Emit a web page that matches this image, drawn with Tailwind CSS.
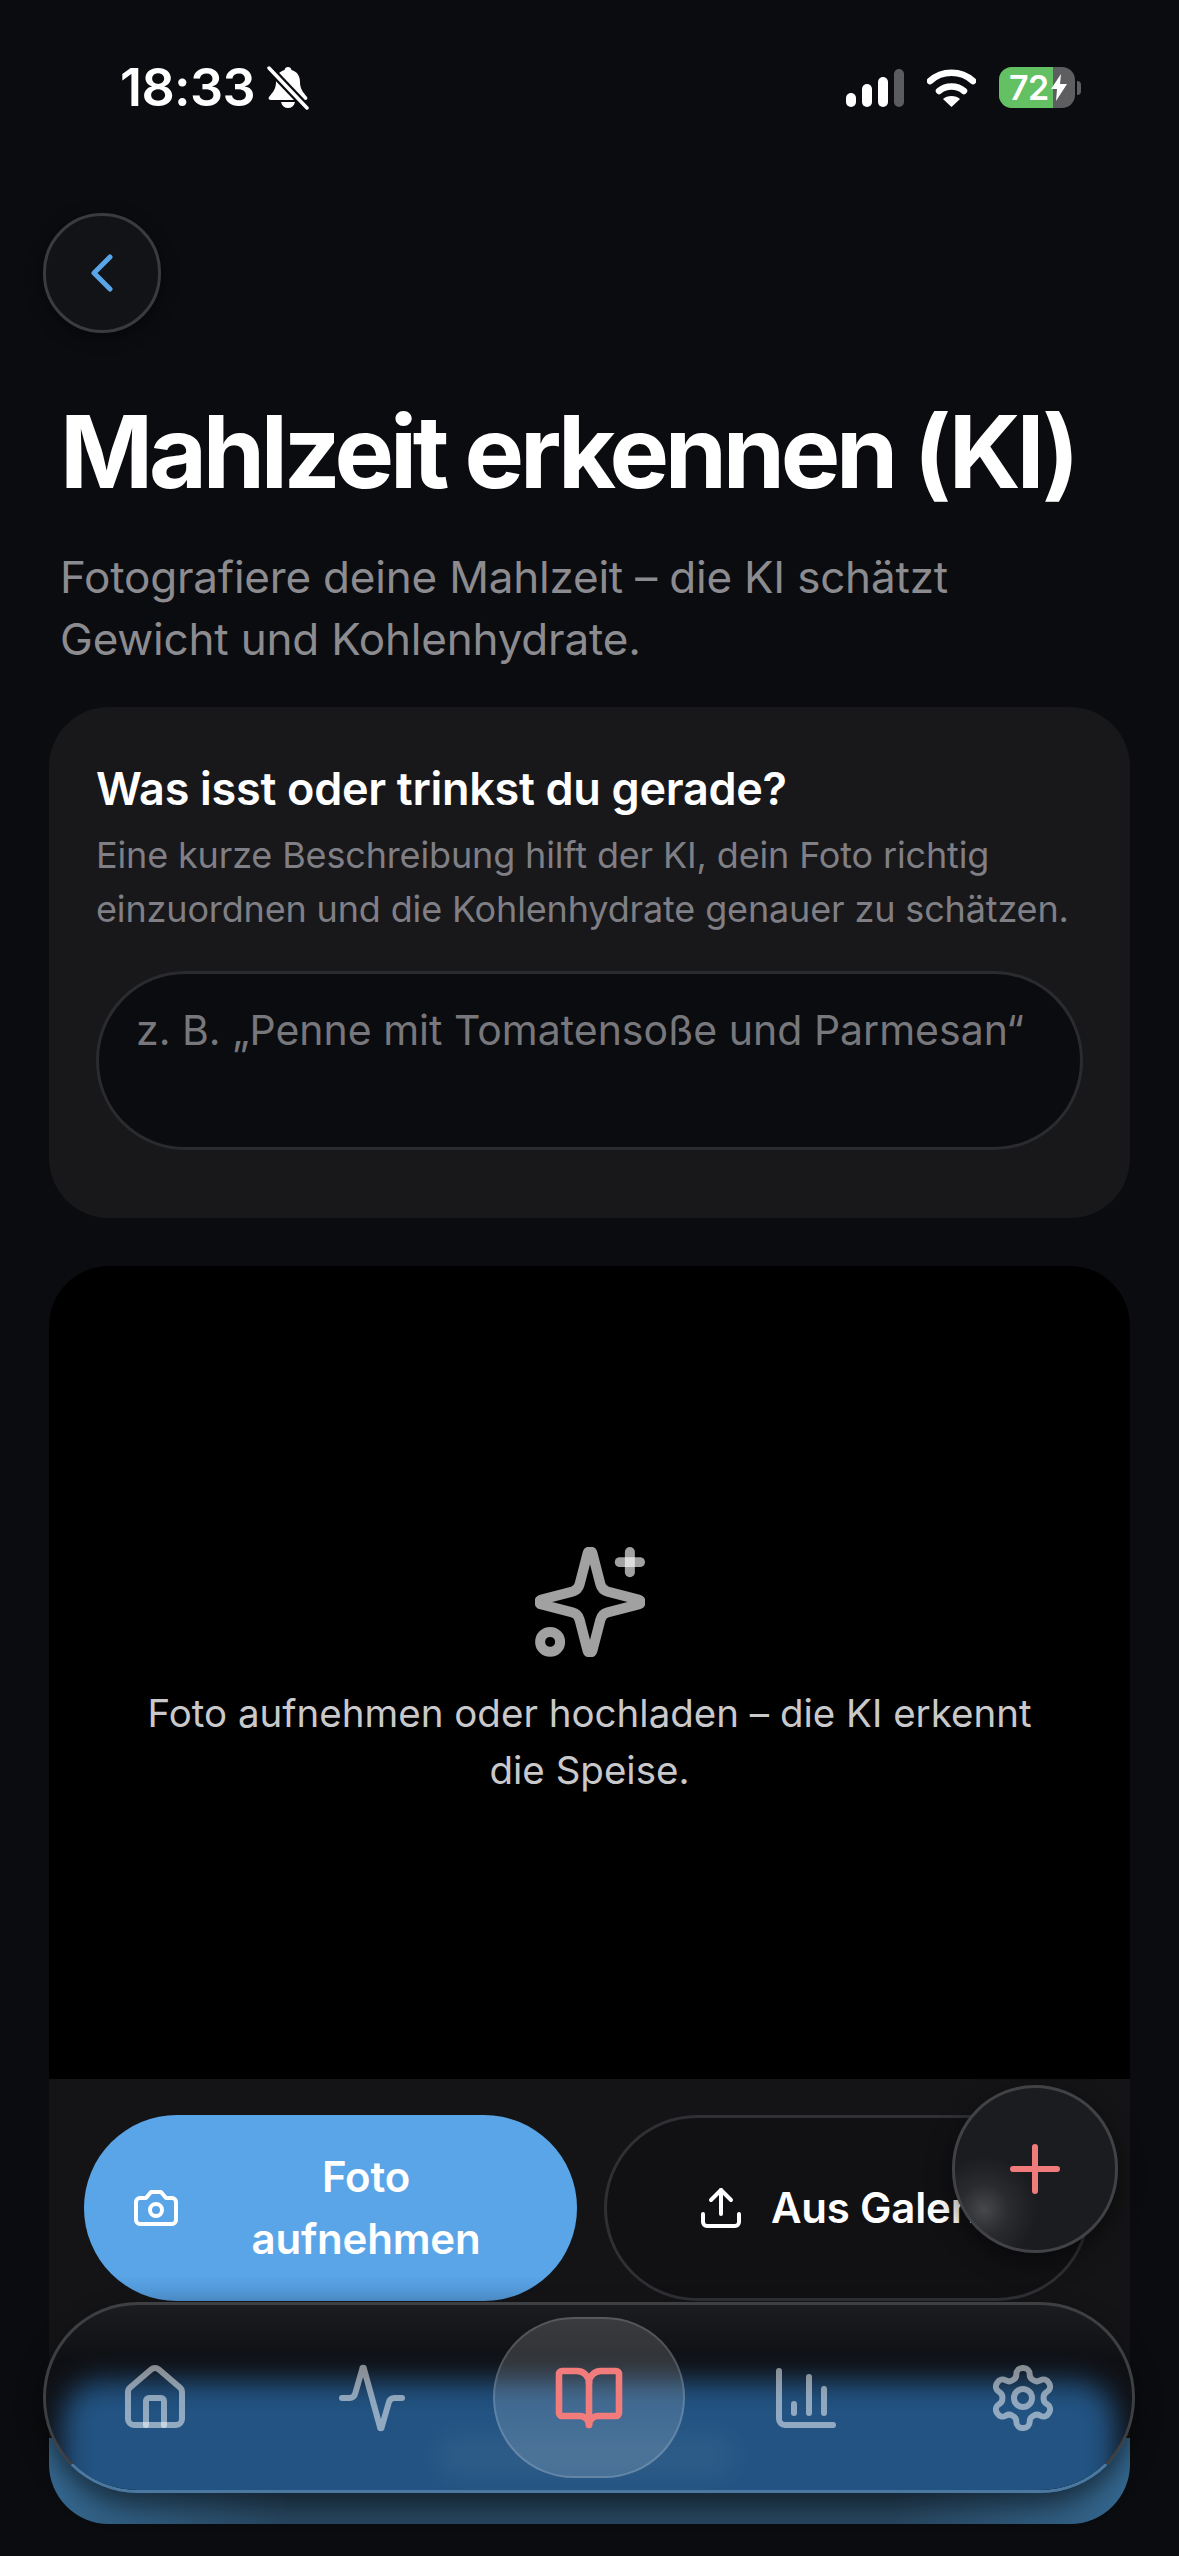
<!doctype html>
<html lang="de">
<head>
<meta charset="utf-8">
<script src="https://cdn.jsdelivr.net/npm/@tailwindcss/browser@4"></script>
</head>
<body class="m-0 bg-[#0b0c0f]">
<div class="relative w-[1179px] h-[2556px] overflow-hidden bg-[#0b0c0f] font-['Inter','Liberation_Sans',sans-serif] text-white">

  <!-- status bar -->
  <div class="flex h-[130px] items-start justify-between pl-[120px] pr-[98px] pt-[60px]">
    <div class="flex items-center gap-[12px]">
      <span class="text-[52px] leading-[56px] font-semibold tracking-[-0.6px]">18:33</span>
      <svg width="42" height="44" viewBox="0 0 42 44" fill="none"><path d="M21 1c2 0 3 1 3.500 3C30 5.500 33 10 33 16c0 7 3 10 7 15 1 2 0 3-2 3H4c-2 0-3-1-2-3 4-5 7-8 7-15C9 10 12 5.500 17.500 4 18 2 19 1 21 1Z" fill="#fff"/><path d="M14 36h14c-1 4-3.500 6-7 6s-6-2-7-6Z" fill="#fff"/><path d="M2 2l38 40" stroke="#0b0c0f" stroke-width="8"/><path d="M2 2l38 40" stroke="#fff" stroke-width="3.500" stroke-linecap="round"/></svg>
    </div>
    <div class="flex items-center gap-[23px] pt-[7px]">
      <svg width="58" height="38" viewBox="0 0 58 38"><rect x="0" y="24" width="10" height="14" rx="5" fill="#fff"/><rect x="16" y="15" width="10" height="23" rx="5" fill="#fff"/><rect x="32" y="8" width="10" height="30" rx="5" fill="#fff"/><rect x="48" y="0" width="10" height="38" rx="5" fill="#5c5c5e"/></svg>
      <svg width="49" height="38" viewBox="0 0 49 38" fill="none"><path d="M3 12C15 1 34 1 46 12" stroke="#fff" stroke-width="6.500" stroke-linecap="round"/><path d="M12 22c7-6 18-6 25 0" stroke="#fff" stroke-width="6.500" stroke-linecap="round"/><path d="M24.500 38 16 30c4-4 13-4 17 0Z" fill="#fff"/></svg>
      <div class="relative flex items-center">
        <div class="relative flex h-[41px] w-[76px] items-center overflow-hidden rounded-[13px] bg-[#5e5e60]">
          <div class="absolute inset-y-0 left-0 w-[54px] bg-[#63c063]"></div>
          <span class="relative pl-[10px] text-[34px] leading-[41px] font-semibold tracking-[-0.5px]">72</span>
          <svg class="absolute left-[52px] top-[7px]" width="16" height="27" viewBox="0 0 16 27"><path d="M10 0 0 15h6l-1 12L16 10H9Z" fill="#fff"/></svg>
        </div>
        <div class="ml-[2px] h-[14px] w-[4px] rounded-r-full bg-[#5e5e60]"></div>
      </div>
    </div>
  </div>

  <main class="flex flex-col">
    <div class="px-[43px] pt-[83px]">
      <button class="flex h-[120px] w-[118px] items-center justify-center rounded-full border-[3px] border-[#3a3b3f] bg-[#121317] shadow-[0_4px_16px_rgba(0,0,0,0.5)]">
        <svg width="28" height="40" viewBox="0 0 28 40" fill="none"><path d="M22 4 6 20l16 16" stroke="#5aa5e8" stroke-width="5" stroke-linecap="round" stroke-linejoin="round"/></svg>
      </button>
    </div>

    <div class="px-[60px] pt-[59px]">
      <h1 class="whitespace-nowrap text-[100px] leading-[120px] font-bold tracking-[-4.25px]">Mahlzeit erkennen (KI)</h1>
      <p class="mt-[34px] text-[44px] leading-[62px] tracking-[-0.2px] text-[#8b8b90]">Fotografiere deine Mahlzeit – die KI schätzt<br>Gewicht und Kohlenhydrate.</p>
    </div>

    <section class="mx-[49px] mt-[37px] h-[511px] rounded-[60px] bg-[#18181b] px-[47px] pt-[54px]">
      <h2 class="text-[45px] leading-[56px] font-semibold tracking-[-0.3px]">Was isst oder trinkst du gerade?</h2>
      <p class="mt-[11px] whitespace-nowrap text-[36px] leading-[54px] tracking-[-0.15px] text-[#7f7f85]">Eine kurze Beschreibung hilft der KI, dein Foto richtig<br>einzuordnen und die Kohlenhydrate genauer zu schätzen.</p>
      <div class="mt-[35px] h-[179px] rounded-[89px] border-[3px] border-[#2a2b2e] bg-[#0b0c0f] px-[37px] pt-[28px] text-[41px] leading-[56px] whitespace-nowrap text-[#77777c]">z. B. „Penne mit Tomatensoße und Parmesan“</div>
    </section>

    <section class="relative mx-[49px] mt-[48px] h-[1258px] overflow-hidden rounded-[60px] bg-[#141416]">
      <div class="flex h-[813px] flex-col items-center justify-center bg-black">
        <svg width="110" height="110" viewBox="0 0 24 24" fill="none" stroke="#fff" stroke-opacity=".63" stroke-width="2.180" stroke-linecap="round" stroke-linejoin="round"><path transform="translate(12 12) scale(1.1) translate(-12 -12)" stroke-width="2" d="M9.937 15.500A2 2 0 0 0 8.500 14.063l-6.135-1.582a.5.5 0 0 1 0-.962L8.500 9.936A2 2 0 0 0 9.937 8.500l1.582-6.135a.5.5 0 0 1 .963 0L14.063 8.500A2 2 0 0 0 15.500 9.937l6.135 1.581a.5.5 0 0 1 0 .964L15.500 14.063a2 2 0 0 0-1.437 1.437l-1.582 6.135a.5.5 0 0 1-.963 0z"/><path d="M20.700 1.100v4.400"/><path d="M22.900 3.300h-4.400"/><circle cx="3.300" cy="20.700" r="2.180"/></svg>
        <p class="mt-[28px] w-[900px] text-center text-[38.500px] leading-[57px] text-[#c9c9cb]">Foto aufnehmen oder hochladen – die KI erkennt<br>die Speise.</p>
      </div>
      <div class="flex h-[445px] items-start gap-[27px] px-[35px] pt-[36px]">
        <button class="flex h-[186px] w-[493px] flex-none items-center rounded-[93px] bg-[linear-gradient(180deg,#5aa5e8_0%,#5aa5e8_86%,#4f92cf_100%)] pl-[48px] pr-[25px]">
          <svg class="flex-none" width="48" height="48" viewBox="0 0 24 24" fill="none" stroke="#fff" stroke-width="2" stroke-linecap="round" stroke-linejoin="round"><path d="M14.500 4h-5L7 7H4a2 2 0 0 0-2 2v9a2 2 0 0 0 2 2h16a2 2 0 0 0 2-2V9a2 2 0 0 0-2-2h-3Z"/><circle cx="12" cy="13" r="3"/></svg>
          <span class="flex-1 text-center text-[42px] leading-[62px] font-semibold tracking-[-0.2px]">Foto<br>aufnehmen</span>
        </button>
        <button class="flex h-[186px] w-[486px] flex-none items-center justify-center gap-[26px] overflow-hidden rounded-[93px] border-[3px] border-[#2f3033] bg-[#111114] pl-[6px] whitespace-nowrap">
          <svg width="48" height="48" viewBox="0 0 24 24" fill="none" stroke="#fff" stroke-width="2" stroke-linecap="round" stroke-linejoin="round"><path d="M21 15v4a2 2 0 0 1-2 2H5a2 2 0 0 1-2-2v-4"/><path d="m17 8-5-5-5 5"/><path d="M12 3v12"/></svg>
          <span class="text-[42px] font-semibold leading-[62px] tracking-[-0.2px]">Aus Galerie</span>
        </button>
      </div>
      <!-- blurred blue button showing below the glass nav -->
      <div class="absolute inset-x-0 bottom-0 h-[86px] bg-[linear-gradient(90deg,#34678f_0%,#27455e_22%,#27455e_78%,#34678f_100%)]"></div>
    </section>
  </main>

  <!-- floating add button -->
  <button class="absolute left-[952px] top-[2085px] flex h-[168px] w-[166px] items-center justify-center rounded-full border-[3px] border-[#414246] bg-[radial-gradient(circle_at_18%_75%,#47484b_0%,#2a2b2e_14%,#1b1c20_30%)] shadow-[0_8px_24px_rgba(0,0,0,0.5)]">
    <svg width="50" height="50" viewBox="0 0 50 50" fill="none" stroke="#ef7b7b" stroke-width="6" stroke-linecap="round"><path d="M25 3v44M3 25h44"/></svg>
  </button>

  <!-- glass tab bar -->
  <nav class="absolute left-[43px] top-[2302px] grid h-[191px] w-[1092px] grid-cols-5 items-center overflow-hidden rounded-[95px] border-[3px] border-[#3d3f43] border-b-[#4a78a0] bg-[linear-gradient(180deg,#1b1c1f_0%,#0f1014_30%)] shadow-[0_12px_24px_rgba(0,0,0,0.5)]">
    <div class="absolute -bottom-[60px] left-[16px] right-[16px] top-[76px] rounded-[40px] bg-[#225382] blur-[14px]"></div>
    <div class="absolute left-[390px] top-[128px] h-[46px] w-[300px] rounded-full bg-white/5 blur-[12px]"></div>

    <div class="relative flex justify-center">
      <svg width="72" height="72" viewBox="0 0 24 24" fill="none" stroke="#fff" stroke-opacity=".5" stroke-width="2" stroke-linecap="round" stroke-linejoin="round"><path d="M15 21v-8a1 1 0 0 0-1-1h-4a1 1 0 0 0-1 1v8"/><path d="M3 10a2 2 0 0 1 .7-1.500l7-6a2 2 0 0 1 2.600 0l7 6A2 2 0 0 1 21 10v9a2 2 0 0 1-2 2H5a2 2 0 0 1-2-2Z"/></svg>
    </div>
    <div class="relative flex justify-center">
      <svg width="72" height="72" viewBox="0 0 24 24" fill="none" stroke="#fff" stroke-opacity=".5" stroke-width="2" stroke-linecap="round" stroke-linejoin="round"><path d="M22 12h-2.500a2 2 0 0 0-1.900 1.500l-2.400 8.300a.25.25 0 0 1-.5 0L9.300 2.200a.25.25 0 0 0-.5 0L6.400 10.500A2 2 0 0 1 4.500 12H2"/></svg>
    </div>
    <div class="relative flex justify-center">
      <div class="flex h-[161px] w-[192px] flex-none items-center justify-center rounded-full border-[2px] border-white/15 bg-white/15">
        <svg width="72" height="72" viewBox="0 0 24 24" fill="none" stroke="#f27c7c" stroke-width="2.200" stroke-linecap="round" stroke-linejoin="round"><path d="M12 7v14"/><path d="M3 18a1 1 0 0 1-1-1V4a1 1 0 0 1 1-1h5a4 4 0 0 1 4 4 4 4 0 0 1 4-4h5a1 1 0 0 1 1 1v13a1 1 0 0 1-1 1h-6a3 3 0 0 0-3 3 3 3 0 0 0-3-3Z"/></svg>
      </div>
    </div>
    <div class="relative flex justify-center">
      <svg width="72" height="72" viewBox="0 0 24 24" fill="none" stroke="#fff" stroke-opacity=".5" stroke-width="2" stroke-linecap="round" stroke-linejoin="round"><path d="M3 3v16a2 2 0 0 0 2 2h16"/><path d="M18 17V9"/><path d="M13 17V5"/><path d="M8 17v-3"/></svg>
    </div>
    <div class="relative flex justify-center">
      <svg width="72" height="72" viewBox="0 0 24 24" fill="none" stroke="#fff" stroke-opacity=".5" stroke-width="2" stroke-linecap="round" stroke-linejoin="round"><path d="M12.220 2h-.44a2 2 0 0 0-2 2v.18a2 2 0 0 1-1 1.730l-.43.25a2 2 0 0 1-2 0l-.15-.08a2 2 0 0 0-2.730.73l-.22.38a2 2 0 0 0 .73 2.730l.15.1a2 2 0 0 1 1 1.720v.51a2 2 0 0 1-1 1.740l-.15.09a2 2 0 0 0-.73 2.730l.22.38a2 2 0 0 0 2.730.73l.15-.08a2 2 0 0 1 2 0l.43.25a2 2 0 0 1 1 1.730V20a2 2 0 0 0 2 2h.44a2 2 0 0 0 2-2v-.18a2 2 0 0 1 1-1.730l.43-.25a2 2 0 0 1 2 0l.15.08a2 2 0 0 0 2.730-.73l.22-.39a2 2 0 0 0-.73-2.730l-.15-.08a2 2 0 0 1-1-1.740v-.5a2 2 0 0 1 1-1.740l.15-.09a2 2 0 0 0 .73-2.730l-.22-.38a2 2 0 0 0-2.730-.73l-.15.08a2 2 0 0 1-2 0l-.43-.25a2 2 0 0 1-1-1.730V4a2 2 0 0 0-2-2Z"/><circle cx="12" cy="12" r="3"/></svg>
    </div>
  </nav>
</div>
</body>
</html>
